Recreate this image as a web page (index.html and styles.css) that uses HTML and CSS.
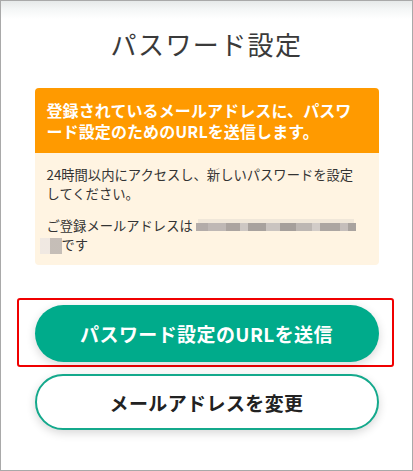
FILE: index.html
```html
<!DOCTYPE html>
<html lang="ja">
<head>
<meta charset="utf-8">
<title>パスワード設定</title>
<link rel="stylesheet" href="styles.css">
</head>
<body>
<div class="frame">
  <div class="topshade"></div>
  <main class="content">
    <h1 class="title">パスワード設定</h1>
    <section class="notice">
      <div class="notice-head">登録されているメールアドレスに、パスワード設定のためのURLを送信します。</div>
      <div class="notice-body">
        <p class="para">24時間以内にアクセスし、新しいパスワードを設定してください。</p>
        <p class="para">ご登録メールアドレスは <span class="blur blur-a"></span><br><span class="blur blur-b"></span>です</p>
      </div>
    </section>
    <div class="highlight">
      <button class="btn btn-primary" type="button">パスワード設定のURLを送信</button>
    </div>
    <button class="btn btn-secondary" type="button">メールアドレスを変更</button>
  </main>
</div>
</body>
</html>
```
FILE: styles.css
```css
html, body {
  margin: 0;
  padding: 0;
  background: #fff;
}
body {
  font-family: "Noto Sans CJK JP", "Noto Sans", sans-serif;
  color: #333;
}
.frame {
  box-sizing: border-box;
  width: 413px;
  height: 471px;
  border: 1px solid #a9a9a9;
  position: relative;
  overflow: hidden;
  background: #fff;
}
.topshade {
  position: absolute;
  left: 0;
  right: 0;
  top: 0;
  height: 18px;
  background: linear-gradient(to bottom, #e6e9e9 0%, #f4f6f6 45%, rgba(255,255,255,0) 100%);
}
.content {
  position: relative;
  width: 344px;
  margin: 0 auto;
  padding-top: 24px;
  display: flex;
  flex-direction: column;
}
.title {
  margin: 0;
  text-align: center;
  font-size: 26px;
  font-weight: 400;
  letter-spacing: 1.4px;
  line-height: 38px;
  color: #3a3a3a;
}
.notice {
  margin-top: 25px;
  border-radius: 4px;
  overflow: hidden;
  background: #fff4e2;
}
.notice-head {
  background: #ff9a00;
  color: #fff;
  font-weight: 700;
  font-size: 16px;
  line-height: 21px;
  padding: 12px 12px 11px;
  letter-spacing: 0.1px;
}
.notice-body {
  padding: 12px 18px 11px 12px;
  font-size: 13.3px;
  line-height: 19px;
  color: #333;
}
.para {
  margin: 0;
}
.para + .para {
  margin-top: 13px;
}
.blur {
  display: inline-block;
  height: 8px;
  vertical-align: middle;
  opacity: 0.75;
}
.blur-a {
  width: 160px;
  background:
    linear-gradient(to right, #9a9596 0 12px, #aaa5a6 12px 30px, #8f8a8b 30px 44px, #bdb8b9 44px 52px, #8c8788 52px 70px, #b9b4b5 70px 84px, #888384 84px 100px, #a8a3a4 100px 116px, #c4bfc0 116px 124px, #918c8d 124px 144px, #b2adae 144px 152px, #8d8889 152px 160px);
  box-shadow: 0 -6px 0 -2px rgba(200,195,196,0.35);
}
.blur-b {
  width: 22px;
  height: 16px;
  margin-left: -7px;
  background: linear-gradient(to right, #e6e1e2 0 10px, #9f9a9b 10px 22px);
  opacity: 0.6;
}
.highlight {
  margin: 33px -15px 0 -18px;
  border: 2px solid #f00000;
  border-radius: 3px;
  padding: 5px 13px 3px 16px;
}
.btn {
  display: block;
  width: 344px;
  box-sizing: border-box;
  border-radius: 999px;
  font-family: "Noto Sans CJK JP", "Noto Sans", sans-serif;
  font-weight: 700;
  font-size: 19px;
  letter-spacing: 0.4px;
  cursor: pointer;
  box-shadow: 0 3px 10px rgba(0,0,0,0.16);
}
.btn-primary {
  height: 57px;
  border: none;
  background: #00ab8b;
  color: #fff;
}
.btn-secondary {
  margin-top: 7px;
  height: 56px;
  border: 2px solid #14a98c;
  background: #fff;
  color: #222;
}
```
